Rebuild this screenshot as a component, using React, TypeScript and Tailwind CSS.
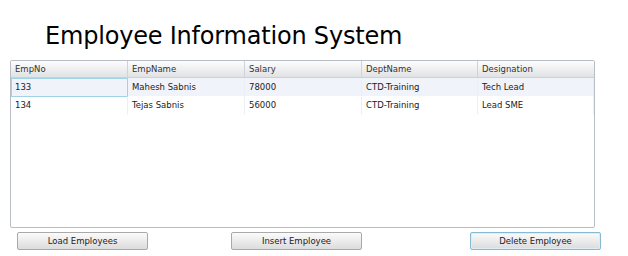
import React from 'react';

const COLUMNS = ['EmpNo', 'EmpName', 'Salary', 'DeptName', 'Designation'];

const ROWS = [
  ['133', 'Mahesh Sabnis', '78000', 'CTD-Training', 'Tech Lead'],
  ['134', 'Tejas Sabnis', '56000', 'CTD-Training', 'Lead SME'],
];

function GridButton({ label, focused, className }: { label: string; focused?: boolean; className?: string }) {
  return (
    <button
      className={
        'w-[131px] h-[18px] rounded-[2px] text-[8.5px] leading-none text-[#222] bg-gradient-to-b from-[#fbfbfb] to-[#dcdcdc] border ' +
        (focused ? 'border-[#86b9d4] shadow-[inset_0_0_0_1px_#dbeef8] ' : 'border-[#a9a9a9] ') +
        (className ?? '')
      }
    >
      {label}
    </button>
  );
}

export default function App() {
  return (
    <div className="w-[628px] h-[256px] bg-white text-black font-['DejaVu_Sans',Verdana,sans-serif] overflow-hidden">
      <h1 className="pl-[45px] pt-[22px] h-[60px] text-[24px] leading-[29px] tracking-[-0.2px]">
        Employee Information System
      </h1>

      <div className="ml-[10px] w-[585px] h-[168px] border border-[#b9bec4] rounded-[2px] overflow-hidden">
        <div className="grid grid-cols-[117px_117px_117px_116px_116px] h-[17px] bg-gradient-to-b from-[#fdfdfd] to-[#e1e2e4] border-b border-[#cdd0d4]">
          {COLUMNS.map((c) => (
            <div key={c} className="pl-[4px] text-[8.5px] leading-[17px] text-[#333] border-r border-[#cfd2d6] last:border-r-0">
              {c}
            </div>
          ))}
        </div>
        {ROWS.map((row, i) => (
          <div
            key={i}
            className={
              'grid grid-cols-[117px_117px_117px_116px_116px] h-[18px] ' + (i === 0 ? 'bg-[#f0f3f9]' : 'bg-white')
            }
          >
            {row.map((v, j) => (
              <div
                key={j}
                className={
                  'pl-[3px] text-[8.5px] leading-[17px] text-[#222] border ' +
                  (i === 0 && j === 0 ? 'border-[#9fd3e6]' : 'border-transparent border-r-[#eceef0]')
                }
              >
                {v}
              </div>
            ))}
          </div>
        ))}
      </div>

      <div className="flex pt-[4px]">
        <GridButton label="Load Employees" className="ml-[17px]" />
        <GridButton label="Insert Employee" className="ml-[83px]" />
        <GridButton label="Delete Employee" focused className="ml-[108px]" />
      </div>
    </div>
  );
}
